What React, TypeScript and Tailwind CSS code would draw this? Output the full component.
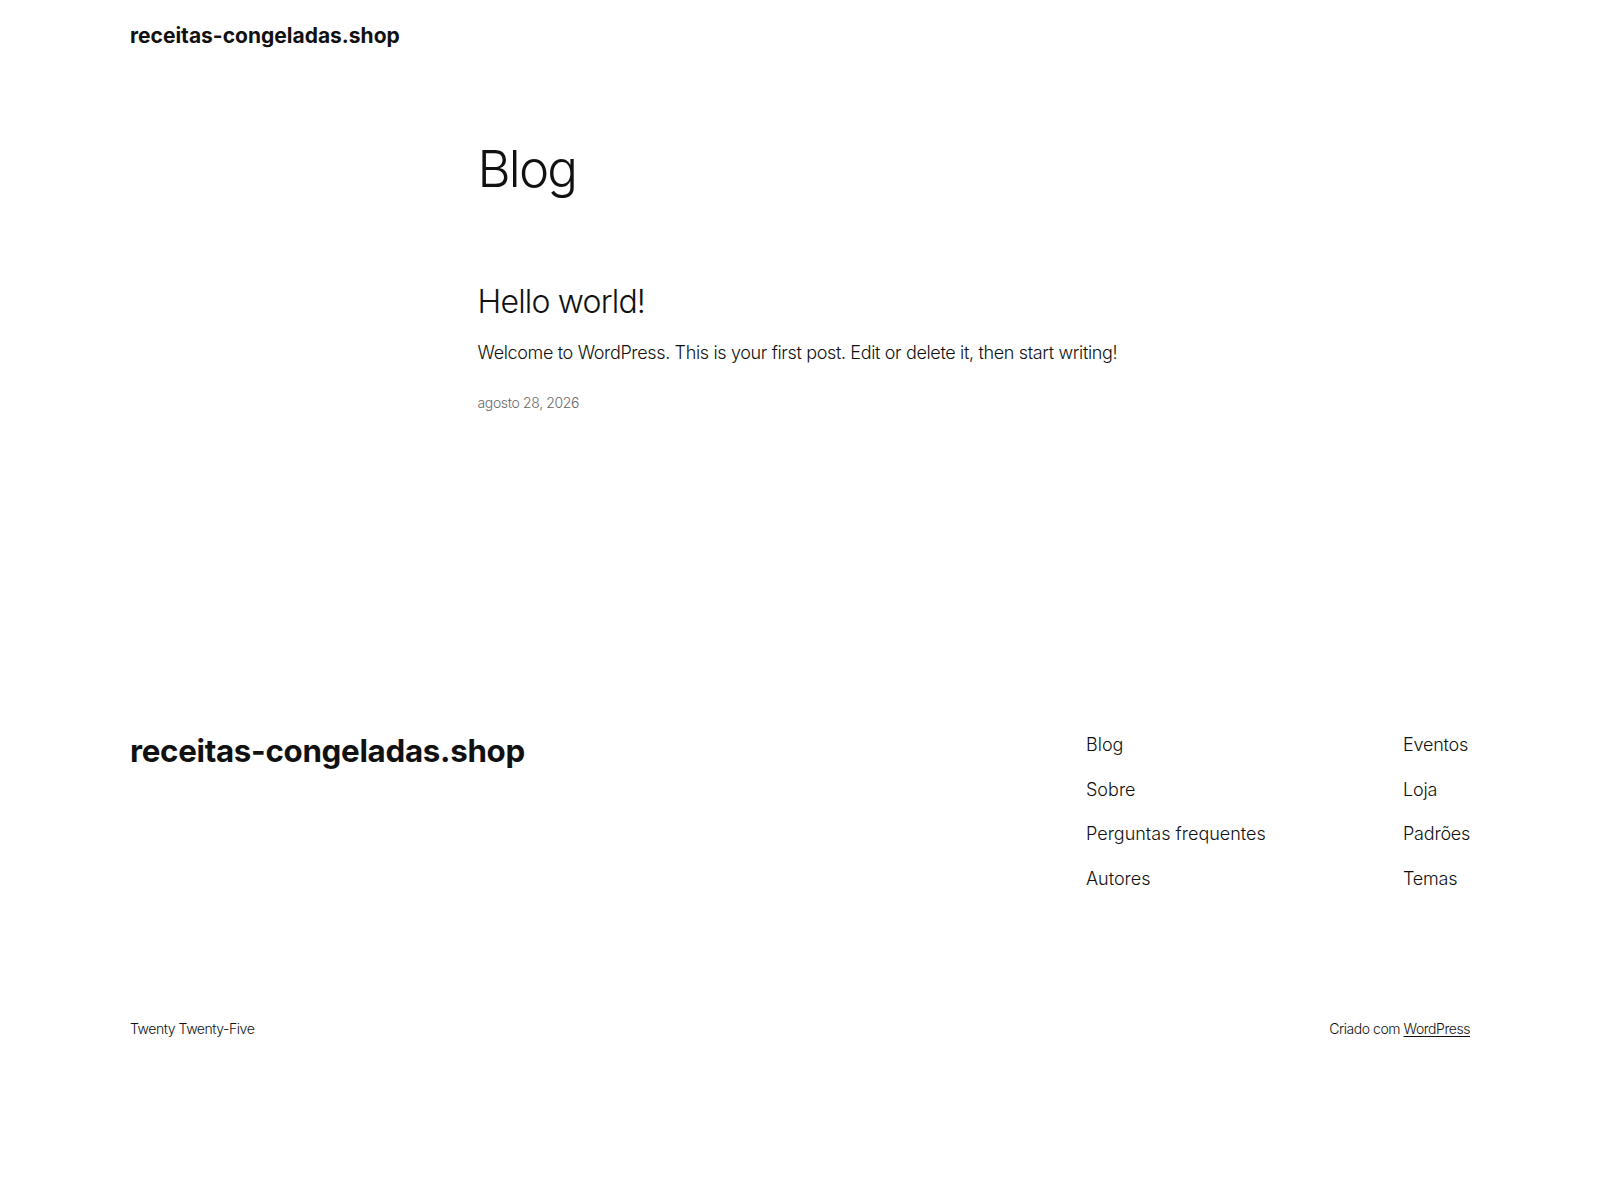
import React from "react";

const font = { fontFamily: "Inter, 'Noto Sans', sans-serif" };

export default function App() {
  return (
    <div className="min-h-[1200px] w-full bg-white text-[#111111]" style={font}>
      <header className="mx-auto w-[1340px] pt-[22px]">
        <a className="block text-[21px] font-bold leading-[28px] tracking-[0px]">receitas-congeladas.shop</a>
      </header>

      <main className="mx-auto w-[645px]">
        <h1 className="mt-[89px] text-[51px] font-light leading-[60px] tracking-[-1.8px]">Blog</h1>
        <article className="mt-[83px]">
          <h2 className="text-[32px] font-light leading-[40px] tracking-[-0.8px]">Hello world!</h2>
          <p className="mt-[17px] whitespace-nowrap text-[18px] font-light leading-[27px] tracking-[-0.35px]">
            Welcome to WordPress. This is your first post. Edit or delete it, then start writing!
          </p>
          <div className="mt-[27px] text-[14px] font-light leading-[20px] tracking-[-0.35px] text-[#686868]">agosto 28, 2026</div>
        </article>
      </main>

      <footer className="mx-auto mt-[318px] w-[1340px]">
        <div className="flex items-start justify-between">
          <div className="mt-[3px] text-[31.3px] font-bold leading-[34px] tracking-[-0.3px]">receitas-congeladas.shop</div>
          <div className="flex">
            <ul className="flex w-[317px] flex-col gap-[17.7px] text-[18px] font-light leading-[27px]">
              <li>Blog</li>
              <li>Sobre</li>
              <li>Perguntas frequentes</li>
              <li>Autores</li>
            </ul>
            <ul className="flex w-[67px] flex-col gap-[17.7px] text-[18px] font-light leading-[27px] tracking-[-0.2px]">
              <li>Eventos</li>
              <li>Loja</li>
              <li className="whitespace-nowrap">Padrões</li>
              <li>Temas</li>
            </ul>
          </div>
        </div>
        <div className="mt-[127px] flex items-center justify-between text-[14px] font-light leading-[20px] tracking-[-0.45px]">
          <span>Twenty Twenty-Five</span>
          <span>
            Criado com <a className="underline underline-offset-2">WordPress</a>
          </span>
        </div>
      </footer>
    </div>
  );
}
